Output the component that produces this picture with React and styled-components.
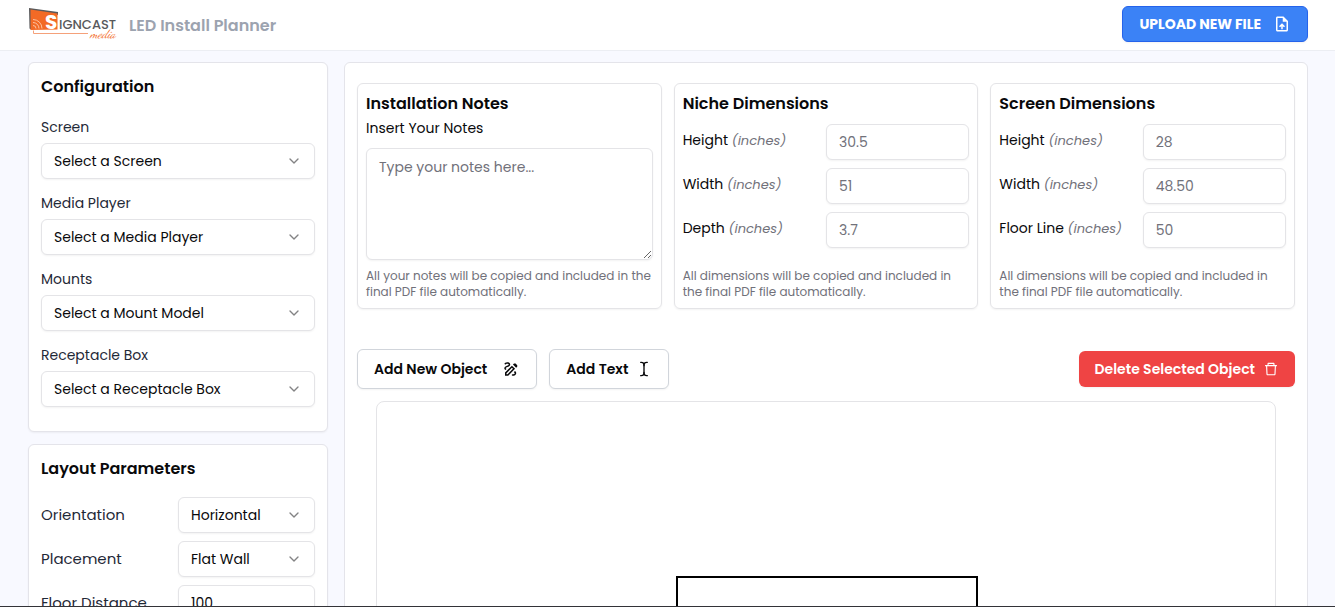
import React from 'react';
import styled, { createGlobalStyle } from 'styled-components';
import { MdOutlineUploadFile, MdOutlineDraw } from 'react-icons/md';
import { AiOutlineDelete } from 'react-icons/ai';
import { LuTextCursor } from 'react-icons/lu';
import { ChevronDown } from 'lucide-react';

const GlobalStyle = createGlobalStyle`
  *, *::before, *::after { box-sizing: border-box; }
  body {
    margin: 0;
    font-family: Poppins, Inter, "Liberation Sans", sans-serif;
    font-size: 15px;
    color: #09090b;
    background: #f8f9ff;
  }
  h1, h2, p { margin: 0; }
  button, input, select, textarea { font: inherit; color: inherit; }
`;

const Shell = styled.div`
  display: flex;
  flex-direction: column;
  height: 100vh;
  border-bottom: 1px solid #333338;
`;

const Header = styled.header`
  display: flex;
  flex: none;
  align-items: center;
  justify-content: space-between;
  padding: 6px 27px 8px 28px;
  background: #fff;
  border-bottom: 1px solid #eceef3;
`;

const Brand = styled.div`
  display: flex;
  align-items: center;
  gap: 11px;
`;

const AppName = styled.h1`
  padding-top: 4px;
  font-size: 16px;
  line-height: 24px;
  font-weight: 600;
  color: #9ca3af;
`;

const Button = styled.button`
  display: inline-flex;
  align-items: center;
  justify-content: center;
  gap: ${({ $gap }) => $gap || 8}px;
  height: ${({ $tall }) => ($tall ? 40 : 36)}px;
  padding: 0 16px;
  border: 1px solid #d1d5db;
  border-radius: 6px;
  background: #fff;
  font-size: 14px;
  font-weight: 600;
  white-space: nowrap;
  box-shadow: 0 1px 2px rgba(0, 0, 0, 0.05);
  cursor: pointer;
`;

const UploadButton = styled(Button)`
  border-color: #2563eb;
  background: #3b82f6;
  color: #fff;
  font-weight: 700;
`;

const DangerButton = styled(Button)`
  border: 0;
  background: #ef4444;
  color: #fff;
`;

const Body = styled.div`
  display: flex;
  flex: 1;
  min-height: 0;
  align-items: flex-start;
  gap: 16px;
  padding: 11px 27px 12px 28px;
  overflow: auto;
  scrollbar-width: none;
`;

const Sidebar = styled.aside`
  display: flex;
  flex: none;
  flex-direction: column;
  gap: 12px;
  width: 300px;
`;

const Card = styled.section`
  display: flex;
  flex-direction: column;
  gap: 16px;
  padding: 12px 12px 24px;
  background: #fff;
  border: 1px solid #e4e4ea;
  border-radius: 6px;
  box-shadow: 0 1px 2px rgba(0, 0, 0, 0.05);
`;

const CardTitle = styled.h2`
  font-size: 16px;
  line-height: 24px;
  font-weight: 600;
`;

const FieldStack = styled.div`
  display: flex;
  flex-direction: column;
  gap: 12px;
`;

const Field = styled.div`
  display: flex;
  flex-direction: column;
  gap: 4px;
`;

const FieldLabel = styled.label`
  font-size: 14px;
  line-height: 24px;
  color: #1f2937;
`;

const ParamGrid = styled.div`
  display: grid;
  grid-template-columns: 1fr 1fr;
  row-gap: 8px;
`;

const ParamLabel = styled.label`
  font-size: 15px;
  line-height: 36px;
  color: #1f2937;
`;

const control = `
  width: 100%;
  min-width: 0;
  border: 1px solid #e4e4e7;
  border-radius: 6px;
  background: #fff;
  font-size: 14px;
  box-shadow: 0 1px 2px rgba(0, 0, 0, 0.05);
  outline-color: #3b82f6;
  &::placeholder { color: #71717a; opacity: 1; }
`;

const Input = styled.input`
  ${control}
  height: 36px;
  padding: 0 12px;
`;

const SelectFrame = styled.div`
  display: grid;
  align-items: center;
  & > * { grid-area: 1 / 1; }
  & > svg {
    justify-self: end;
    margin-right: 13px;
    opacity: 0.5;
    pointer-events: none;
  }
`;

const NativeSelect = styled.select`
  ${control}
  height: 36px;
  padding: 0 32px 0 12px;
  appearance: none;
`;

const Main = styled.main`
  flex: 1;
  min-width: 0;
  padding: 20px 12px;
  background: #fff;
  border: 1px solid #e4e4ea;
  border-radius: 6px;
`;

const Panels = styled.div`
  display: grid;
  grid-template-columns: repeat(3, 1fr);
  gap: 12px;
`;

const Panel = styled.section`
  display: flex;
  flex-direction: column;
  min-width: 0;
  padding: 8px;
  border: 1px solid #e4e4e7;
  border-radius: 6px;
  box-shadow: 0 1px 2px rgba(0, 0, 0, 0.05);
`;

const NotesLabel = styled.label`
  margin: 2px 0 10px;
  font-size: 14px;
  line-height: 20px;
`;

const TextArea = styled.textarea`
  ${control}
  height: 112px;
  padding: 8px 12px;
  line-height: 20px;
  resize: vertical;
`;

const DimensionGrid = styled.div`
  display: grid;
  grid-template-columns: 1fr 1fr;
  row-gap: 8px;
  margin-top: 8px;
`;

const DimensionLabel = styled.label`
  font-size: 14px;
  line-height: 32px;
  white-space: nowrap;
  em {
    font-size: 13px;
    color: #71717a;
  }
`;

const Hint = styled.p`
  margin-top: auto;
  padding-top: 8px;
  font-size: 12px;
  line-height: 16px;
  color: #71717a;
`;

const Toolbar = styled.div`
  display: flex;
  align-items: center;
  justify-content: space-between;
  margin: 40px 0 12px;
`;

const ToolGroup = styled.div`
  display: flex;
  gap: 12px;
`;

const Canvas = styled.div`
  max-width: 900px;
  margin: 0 auto;
  border: 1px solid #e4e4e7;
  border-radius: 8px;
  svg { display: block; width: 100%; height: auto; }
`;

function Logo() {
  return (
    <svg width="90" height="34" viewBox="0 0 90 34" role="img" aria-label="Signcast Media">
      <path d="M1 1 L30 5 L30 8 L3 4 L3 22.500 L1.500 21.500 Z" fill="#58595b" />
      <path d="M2.500 2.500 L29.500 6.500 L29.500 22.500 L2.500 23 Z" fill="#f26a26" />
      <g fill="none" stroke="#fbc3a2" strokeWidth="1">
        <path d="M5 18.500 a3 3 0 0 1 3 3" />
        <path d="M5 15.500 a6 6 0 0 1 6 6" />
        <path d="M5 12.500 a9 9 0 0 1 9 9" />
      </g>
      <path d="M5.500 23.500 V26.500 H60" fill="none" stroke="#f5a17a" strokeWidth="1" />
      <text x="17" y="22" fontFamily="Poppins, Lato, sans-serif" fontSize="20" fontWeight="700" fill="#fff">S</text>
      <text x="31" y="22" fontFamily="Poppins, Lato, sans-serif" fontSize="13" fontWeight="500" fill="#58595b">IGNCAST</text>
      <text x="62" y="31" fontFamily="'Dancing Script', 'Liberation Serif', cursive" fontSize="12" fontStyle="italic" fill="#f26a26">media</text>
    </svg>
  );
}

function Select({ id, options }) {
  return (
    <SelectFrame>
      <NativeSelect id={id}>
        {options.map((option) => (
          <option key={option}>{option}</option>
        ))}
      </NativeSelect>
      <ChevronDown size={16} aria-hidden="true" />
    </SelectFrame>
  );
}

const configuration = [
  ['screen', 'Screen', 'Select a Screen'],
  ['player', 'Media Player', 'Select a Media Player'],
  ['mount', 'Mounts', 'Select a Mount Model'],
  ['box', 'Receptacle Box', 'Select a Receptacle Box'],
];

const dimensionPanels = [
  {
    key: 'niche',
    title: 'Niche Dimensions',
    rows: [['Height', '30.5'], ['Width', '51'], ['Depth', '3.7']],
  },
  {
    key: 'screen-size',
    title: 'Screen Dimensions',
    rows: [['Height', '28'], ['Width', '48.50'], ['Floor Line', '50']],
  },
];

function DimensionPanel({ name, title, rows }) {
  return (
    <Panel>
      <CardTitle>{title}</CardTitle>
      <DimensionGrid>
        {rows.map(([label, value]) => {
          const id = `${name}-${label.replace(' ', '-').toLowerCase()}`;
          return (
            <React.Fragment key={id}>
              <DimensionLabel htmlFor={id}>
                {label} <em>(inches)</em>
              </DimensionLabel>
              <Input id={id} placeholder={value} />
            </React.Fragment>
          );
        })}
      </DimensionGrid>
      <Hint>All dimensions will be copied and included in the final PDF file automatically.</Hint>
    </Panel>
  );
}

export default function App() {
  return (
    <Shell>
      <GlobalStyle />
      <Header>
        <Brand>
          <Logo />
          <AppName>LED Install Planner</AppName>
        </Brand>
        <UploadButton type="button" $gap={12}>
          UPLOAD NEW FILE
          <MdOutlineUploadFile size={18} aria-hidden="true" />
        </UploadButton>
      </Header>
      <Body>
        <Sidebar>
          <Card>
            <CardTitle>Configuration</CardTitle>
            <FieldStack>
              {configuration.map(([id, label, prompt]) => (
                <Field key={id}>
                  <FieldLabel htmlFor={id}>{label}</FieldLabel>
                  <Select id={id} options={[prompt]} />
                </Field>
              ))}
            </FieldStack>
          </Card>
          <Card>
            <CardTitle>Layout Parameters</CardTitle>
            <ParamGrid>
              <ParamLabel htmlFor="orientation">Orientation</ParamLabel>
              <Select id="orientation" options={['Horizontal', 'Vertical']} />
              <ParamLabel htmlFor="placement">Placement</ParamLabel>
              <Select id="placement" options={['Flat Wall', 'Niche']} />
              <ParamLabel htmlFor="floor-distance">Floor Distance</ParamLabel>
              <Input id="floor-distance" defaultValue="100" />
            </ParamGrid>
          </Card>
        </Sidebar>
        <Main>
          <Panels>
            <Panel>
              <CardTitle>Installation Notes</CardTitle>
              <NotesLabel htmlFor="notes">Insert Your Notes</NotesLabel>
              <TextArea id="notes" placeholder="Type your notes here..." />
              <Hint>All your notes will be copied and included in the final PDF file automatically.</Hint>
            </Panel>
            {dimensionPanels.map(({ key, title, rows }) => (
              <DimensionPanel key={key} name={key} title={title} rows={rows} />
            ))}
          </Panels>
          <Toolbar>
            <ToolGroup>
              <Button type="button" $tall $gap={15}>
                Add New Object
                <MdOutlineDraw size={18} aria-hidden="true" />
              </Button>
              <Button type="button" $tall>
                Add Text
                <LuTextCursor size={16} aria-hidden="true" />
              </Button>
            </ToolGroup>
            <DangerButton type="button">
              Delete Selected Object
              <AiOutlineDelete size={16} aria-hidden="true" />
            </DangerButton>
          </Toolbar>
          <Canvas>
            <svg viewBox="0 0 898 600" role="img" aria-label="Installation drawing">
              <rect x="300" y="175" width="300" height="180" fill="none" stroke="#000" strokeWidth="2" />
            </svg>
          </Canvas>
        </Main>
      </Body>
    </Shell>
  );
}
